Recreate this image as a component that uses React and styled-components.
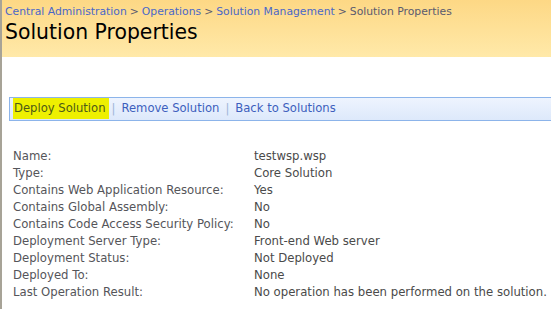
import React from "react";
import styled, { createGlobalStyle } from "styled-components";

const Global = createGlobalStyle`
  html, body { margin: 0; padding: 0; background: #fff; }
  body { font-family: "DejaVu Sans", Verdana, sans-serif; }
`;

const Page = styled.div`
  border-left: 2px solid #a7a397;
  min-height: 309px;
  box-sizing: border-box;
  width: 551px;
  overflow: hidden;
`;

const Header = styled.div`
  height: 57px;
  box-sizing: border-box;
  padding: 4px 0 0 3px;
  background: linear-gradient(#fdd885, #ffe9a9);
`;

const Crumbs = styled.div`
  font-size: 10.8px;
  line-height: 16px;
  color: #5a5a6e;
  white-space: nowrap;
`;

const Crumb = styled.a`
  color: #4a68c8;
  text-decoration: none;
`;

const Sep = styled.span`
  color: #5a5a6e;
  margin: 0 3px;
`;

const Title = styled.h1`
  margin: 0;
  font-family: "DejaVu Sans", Verdana, sans-serif;
  font-weight: normal;
  font-size: 20.4px;
  line-height: 24px;
  color: #000;
`;

const Toolbar = styled.div`
  margin: 40px 0 0 7px;
  height: 24px;
  box-sizing: border-box;
  border: 1px solid #8cb4ea;
  border-right: none;
  background: linear-gradient(#eef4fe, #dde9fb);
  display: flex;
  align-items: flex-start;
  padding-left: 3px;
  font-size: 11.6px;
  white-space: nowrap;
`;

const Action = styled.a`
  color: ${(p) => (p.$active ? "#4d5a17" : "#3d5fbd")};
  background: ${(p) => (p.$active ? "#eef000" : "transparent")};
  text-decoration: none;
  padding: 0 3px 0 1px;
  line-height: 21px;
`;

const Bar = styled.span`
  color: #9fb6d8;
  margin: 0 5px 0 3px;
  line-height: 21px;
`;

const Props = styled.div`
  margin: 27px 0 0 11px;
  display: grid;
  grid-template-columns: 241px auto;
  font-size: 11.7px;
  line-height: 17px;
  white-space: nowrap;
`;

const Label = styled.div`
  color: #55555a;
`;

const Value = styled.div`
  color: #4a4a4a;
`;

const rows = [
  ["Name:", "testwsp.wsp"],
  ["Type:", "Core Solution"],
  ["Contains Web Application Resource:", "Yes"],
  ["Contains Global Assembly:", "No"],
  ["Contains Code Access Security Policy:", "No"],
  ["Deployment Server Type:", "Front-end Web server"],
  ["Deployment Status:", "Not Deployed"],
  ["Deployed To:", "None"],
  ["Last Operation Result:", "No operation has been performed on the solution."],
];

export default function App() {
  return (
    <>
      <Global />
      <Page>
        <Header>
          <Crumbs>
            <Crumb href="#">Central Administration</Crumb>
            <Sep>&gt;</Sep>
            <Crumb href="#">Operations</Crumb>
            <Sep>&gt;</Sep>
            <Crumb href="#">Solution Management</Crumb>
            <Sep>&gt;</Sep>
            <span>Solution Properties</span>
          </Crumbs>
          <Title>Solution Properties</Title>
        </Header>
        <Toolbar>
          <Action href="#" $active>Deploy Solution</Action>
          <Bar>|</Bar>
          <Action href="#">Remove Solution</Action>
          <Bar>|</Bar>
          <Action href="#">Back to Solutions</Action>
        </Toolbar>
        <Props>
          {rows.map(([l, v]) => (
            <React.Fragment key={l}>
              <Label>{l}</Label>
              <Value>{v}</Value>
            </React.Fragment>
          ))}
        </Props>
      </Page>
    </>
  );
}
